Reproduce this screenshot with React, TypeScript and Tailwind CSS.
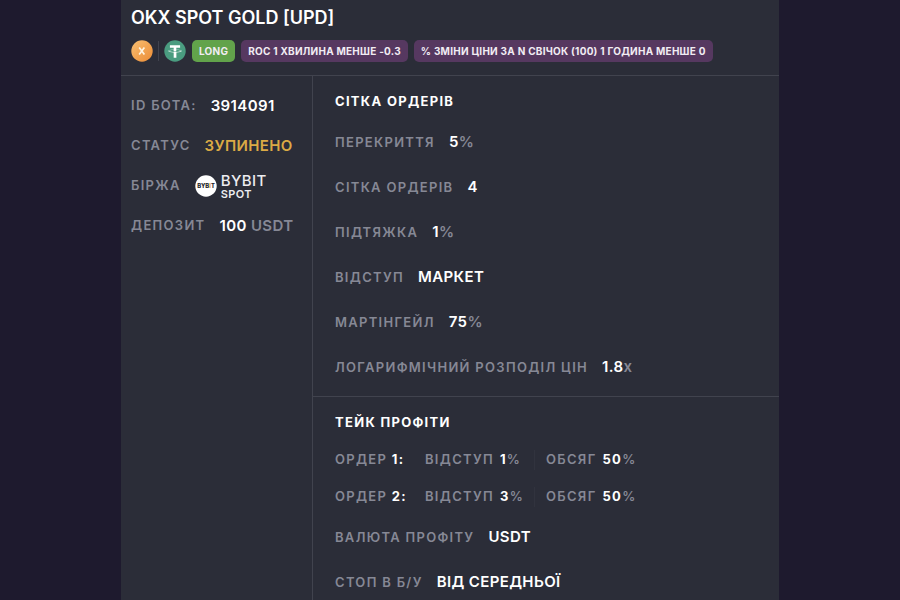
import type { ReactNode } from 'react';
import clsx from 'clsx';

interface FieldProps {
  label: string;
  className?: string;
  children: ReactNode;
}

interface TakeProfit {
  id: number;
  offset: number;
  volume: number;
}

const takeProfits: TakeProfit[] = [
  { id: 1, offset: 1, volume: 50 },
  { id: 2, offset: 3, volume: 50 },
];

const conditions = [
  'ROC 1 ХВИЛИНА МЕНШЕ -0.3',
  '% ЗМІНИ ЦІНИ ЗА N СВІЧОК (100) 1 ГОДИНА МЕНШЕ 0',
];

function Field({ label, className, children }: FieldProps) {
  return (
    <div className={clsx('flex items-center gap-3.5', className)}>
      <dt className="text-[13px] font-semibold tracking-widest text-[#868895]">{label}</dt>
      <dd className="text-[15px] font-semibold tracking-wide text-white">{children}</dd>
    </div>
  );
}

function Unit({ children }: { children: ReactNode }) {
  return <span className="text-[#868895]">{children}</span>;
}

function Badge({ color, children }: { color: string; children: ReactNode }) {
  return (
    <span className={clsx('flex h-[22px] items-center rounded-[5px] px-[7px] text-[10px] font-bold tracking-wide text-[#f1ecf3]', color)}>
      {children}
    </span>
  );
}

function SectionTitle({ children }: { children: ReactNode }) {
  return <h2 className="text-[13px] leading-5 font-bold tracking-widest text-white">{children}</h2>;
}

function GoldIcon() {
  return (
    <svg viewBox="0 0 22 22" className="size-[22px]" aria-hidden="true">
      <defs>
        <linearGradient id="gold" x1="0" y1="0" x2="1" y2="1">
          <stop offset="0" stopColor="#f8bf72" />
          <stop offset="1" stopColor="#ec8c35" />
        </linearGradient>
      </defs>
      <circle cx="11" cy="11" r="10.7" fill="url(#gold)" />
      <path d="M8.2 7.6l5.2 6.8M13.4 7.6l-5.2 6.8" stroke="#fff4e2" strokeWidth="1.7" />
    </svg>
  );
}

function TetherIcon() {
  return (
    <svg viewBox="0 0 32 32" className="size-[22px]" aria-hidden="true">
      <circle cx="16" cy="16" r="15.6" fill="#4a9c80" />
      <path
        fill="#fff"
        d="M17.9 17.4v-.1c-.1 0-.7.1-1.9.1-1 0-1.7 0-2-.1v.1c-3.9-.2-6.9-.9-6.9-1.7s3-1.5 6.9-1.7v2.7c.3 0 1 .1 2 .1 1.2 0 1.8-.1 1.9-.1V14c3.9.2 6.8.9 6.8 1.7s-2.900 1.500-6.800 1.700m0-3.600v-2.400h5.500V7.700H8.600v3.700h5.500v2.400c-4.500.2-7.800 1.100-7.800 2.200s3.300 1.900 7.800 2.200v7.700H18v-7.700c4.500-.2 7.800-1.100 7.800-2.200s-3.400-2-7.900-2.200"
      />
    </svg>
  );
}

function BybitIcon() {
  return (
    <svg viewBox="0 0 22 22" className="size-[22px] tracking-normal" aria-hidden="true">
      <circle cx="11" cy="11" r="10.7" fill="#fff" />
      <text x="11" y="13" textAnchor="middle" fontSize="5.8" fontWeight="800" fill="#24252c">
        BYB<tspan fill="#dfa23c">I</tspan>T
      </text>
    </svg>
  );
}

export default function App() {
  return (
    <div className="flex min-h-screen justify-center bg-[#1e1a2e] font-['Inter','Noto_Sans',sans-serif]">
      <main className="flex w-full max-w-[658px] flex-col bg-[#2b2d38]">
        <header className="border-b border-[#41434e] px-[10px] pt-1.5 pb-[13px]">
          <h1 className="text-[18px] leading-6 font-semibold text-white">OKX SPOT GOLD [UPD]</h1>
          <div className="mt-2.5 flex flex-wrap items-center gap-1.5">
            <GoldIcon />
            <span className="-mx-px h-5 w-px bg-[#41434e]" />
            <TetherIcon />
            <Badge color="bg-[#62a34b]">LONG</Badge>
            {conditions.map((condition) => (
              <Badge key={condition} color="bg-[#563860]">
                {condition}
              </Badge>
            ))}
          </div>
        </header>

        <div className="flex grow">
          <aside className="w-48 shrink-0 border-r border-[#41434e] px-[10px] pt-[10px]">
            <dl>
              <Field label="ID БОТА:" className="h-10">
                3914091
              </Field>
              <Field label="СТАТУС" className="h-10">
                <span className="text-[#dcaa45]">ЗУПИНЕНО</span>
              </Field>
              <Field label="БІРЖА" className="h-10">
                <span className="flex items-center gap-1">
                  <BybitIcon />
                  <span className="flex flex-col text-[#ececf0]">
                    <span className="text-[15px] leading-[15px] font-medium">BYBIT</span>
                    <span className="text-[11px] leading-3">SPOT</span>
                  </span>
                </span>
              </Field>
              <Field label="ДЕПОЗИТ" className="h-10">
                100 <Unit>USDT</Unit>
              </Field>
            </dl>
          </aside>

          <div className="min-w-0 grow">
            <section className="border-b border-[#41434e] px-[22px] pt-[15px] pb-1.5">
              <SectionTitle>СІТКА ОРДЕРІВ</SectionTitle>
              <dl className="mt-[9px]">
                <Field label="ПЕРЕКРИТТЯ" className="h-[45px]">
                  5<Unit>%</Unit>
                </Field>
                <Field label="СІТКА ОРДЕРІВ" className="h-[45px]">
                  4
                </Field>
                <Field label="ПІДТЯЖКА" className="h-[45px]">
                  1<Unit>%</Unit>
                </Field>
                <Field label="ВІДСТУП" className="h-[45px]">
                  МАРКЕТ
                </Field>
                <Field label="МАРТІНГЕЙЛ" className="h-[45px]">
                  75<Unit>%</Unit>
                </Field>
                <Field label="ЛОГАРИФМІЧНИЙ РОЗПОДІЛ ЦІН" className="h-[45px]">
                  1.8<Unit>x</Unit>
                </Field>
              </dl>
            </section>

            <section className="px-[22px] pt-[15px]">
              <SectionTitle>ТЕЙК ПРОФІТИ</SectionTitle>
              <ul className="mt-[9px] text-[13px] font-semibold tracking-widest text-[#868895]">
                {takeProfits.map((order) => (
                  <li key={order.id} className="flex h-[37px] items-center">
                    <span className="w-[90px]">
                      ОРДЕР <b className="font-bold text-white">{order.id}:</b>
                    </span>
                    <span className="flex h-5 w-[110px] items-center gap-1.5 border-r border-[#31333e]">
                      ВІДСТУП
                      <span>
                        <b className="font-bold text-white">{order.offset}</b>%
                      </span>
                    </span>
                    <span className="flex items-center gap-1.5 pl-[11px]">
                      ОБСЯГ
                      <span>
                        <b className="font-bold text-white">{order.volume}</b>%
                      </span>
                    </span>
                  </li>
                ))}
              </ul>
              <dl>
                <Field label="ВАЛЮТА ПРОФІТУ" className="h-[45px]">
                  USDT
                </Field>
                <Field label="СТОП В Б/У" className="h-[45px]">
                  ВІД СЕРЕДНЬОЇ
                </Field>
              </dl>
            </section>
          </div>
        </div>
      </main>
    </div>
  );
}
